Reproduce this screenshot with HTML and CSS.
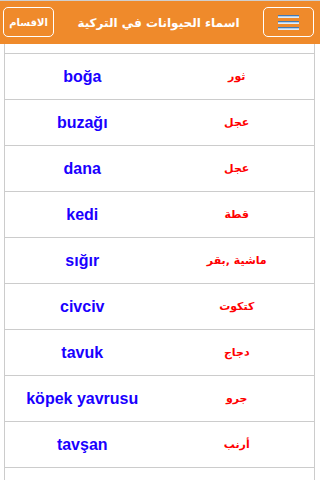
FILE: index.html
```html
<!DOCTYPE html>
<html lang="ar" dir="rtl">
<head>
<meta charset="utf-8">
<link rel="stylesheet" href="styles.css">
</head>
<body>
<header class="bar">
  <button class="btn menu" aria-label="menu">
    <span class="line"></span><span class="line"></span><span class="line"></span>
  </button>
  <h1 class="title">اسماء الحيوانات في التركية</h1>
  <button class="btn sections">الاقسام</button>
</header>
<div class="table">
  <div class="row head"></div>
  <div class="row"><span class="ar">ثور</span><span class="tr">boğa</span></div>
  <div class="row"><span class="ar">عجل</span><span class="tr">buzağı</span></div>
  <div class="row"><span class="ar">عجل</span><span class="tr">dana</span></div>
  <div class="row"><span class="ar">قطة</span><span class="tr">kedi</span></div>
  <div class="row"><span class="ar">ماشية ,بقر</span><span class="tr">sığır</span></div>
  <div class="row"><span class="ar">كتكوت</span><span class="tr">civciv</span></div>
  <div class="row"><span class="ar">دجاج</span><span class="tr">tavuk</span></div>
  <div class="row"><span class="ar">جرو</span><span class="tr">köpek yavrusu</span></div>
  <div class="row"><span class="ar">أرنب</span><span class="tr">tavşan</span></div>
  <div class="row"><span class="ar">&nbsp;</span><span class="tr">&nbsp;</span></div>
</div>
</body>
</html>
```
FILE: styles.css
```css
html, body {
  margin: 0;
  padding: 0;
  background: #fff;
  overflow: hidden;
  height: 480px;
}
body {
  font-family: "Liberation Sans", "DejaVu Sans", Arial, sans-serif;
}
.bar {
  height: 43px;
  border-top: 1px solid #cfcfcf;
  background: #ef8a2b;
  display: flex;
  align-items: center;
  justify-content: space-between;
  padding: 0 6px 0 3px;
}
.btn {
  box-sizing: border-box;
  height: 30px;
  border: 1px solid #fff;
  border-radius: 5px;
  background: transparent;
  padding: 0;
  margin: 0;
  display: flex;
  align-items: center;
  justify-content: center;
  color: #fff;
  margin-top: -1px;
}
.menu {
  width: 51px;
  flex-direction: column;
  gap: 3px;
}
.line {
  display: block;
  width: 21px;
  height: 3px;
  background: linear-gradient(#1d4f8a 0, #6ea6dc 34%, #ffffff 70%, #b9d4ef 100%);
}
.sections {
  width: 51px;
  font-family: "DejaVu Sans", sans-serif;
  font-weight: bold;
  font-size: 10px;
}
.title {
  margin: 0;
  color: #fff;
  font-family: "DejaVu Sans", sans-serif;
  font-weight: bold;
  font-size: 12px;
}
.table {
  margin: 0 5px 0 4px;
  width: 311px;
  box-sizing: border-box;
  border-left: 1px solid #cccccc;
  border-right: 1px solid #cccccc;
}
.row {
  height: 45px;
  border-bottom: 1px solid #cccccc;
  display: grid;
  grid-template-columns: 1fr 1fr;
  align-items: center;
  text-align: center;
}
.row.head {
  height: 9px;
}
.tr {
  color: #1a00ff;
  font-weight: bold;
  font-size: 16px;
  direction: ltr;
}
.ar {
  color: #ff0000;
  font-family: "DejaVu Sans", sans-serif;
  font-weight: bold;
  font-size: 11px;
}
```
